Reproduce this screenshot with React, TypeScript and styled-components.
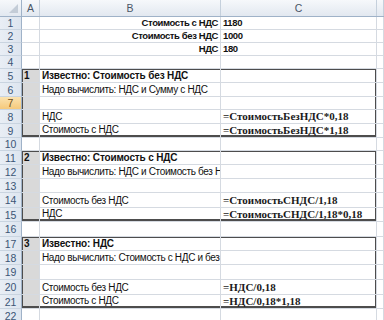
import React from "react";
import styled, { createGlobalStyle, css } from "styled-components";

const GlobalStyle = createGlobalStyle`
	html, body {
		margin: 0;
		padding: 0;
		background: #ffffff;
		overflow: hidden;
	}
`;

const COLS = "22px 18px 181px 156px 1fr";
const GRID = "#d5dae1";
const BOX = "#4d4d4d";

type BoxPos = "first" | "mid" | "last";

type RowData = {
	n: number;
	h: number;
	a?: string;
	b?: string;
	c?: string;
	bold?: boolean;
	top?: boolean;
	formula?: boolean;
	box?: BoxPos;
	selected?: boolean;
};

const rows: RowData[] = [
	{ n: 1, h: 13, b: "Стоимость с НДС", c: "1180", top: true },
	{ n: 2, h: 13, b: "Стоимость без НДС", c: "1000", top: true },
	{ n: 3, h: 13, b: "НДС", c: "180", top: true },
	{ n: 4, h: 13 },
	{ n: 5, h: 14, a: "1", b: "Известно: Стоимость без НДС", bold: true, box: "first" },
	{ n: 6, h: 14, b: "Надо вычислить: НДС и Сумму с НДС", box: "mid" },
	{ n: 7, h: 13, box: "mid", selected: true },
	{ n: 8, h: 14, b: "НДС", c: "=СтоимостьБезНДС*0,18", formula: true, box: "mid" },
	{ n: 9, h: 14, b: "Стоимость с НДС", c: "=СтоимостьБезНДС*1,18", formula: true, box: "last" },
	{ n: 10, h: 13 },
	{ n: 11, h: 14, a: "2", b: "Известно: Стоимость с НДС", bold: true, box: "first" },
	{ n: 12, h: 14, b: "Надо вычислить: НДС и Стоимость без НДС", box: "mid" },
	{ n: 13, h: 14, box: "mid" },
	{ n: 14, h: 15, b: "Стоимость без НДС", c: "=СтоимостьСНДС/1,18", formula: true, box: "mid" },
	{ n: 15, h: 14, b: "НДС", c: "=СтоимостьСНДС/1,18*0,18", formula: true, box: "last" },
	{ n: 16, h: 15 },
	{ n: 17, h: 14, a: "3", b: "Известно: НДС", bold: true, box: "first" },
	{ n: 18, h: 14, b: "Надо вычислить: Стоимость с НДС и  без НДС", box: "mid" },
	{ n: 19, h: 15, box: "mid" },
	{ n: 20, h: 15, b: "Стоимость без НДС", c: "=НДС/0,18", formula: true, box: "mid" },
	{ n: 21, h: 14, b: "Стоимость с НДС", c: "=НДС/0,18*1,18", formula: true, box: "last" },
	{ n: 22, h: 14 },
];

const Sheet = styled.div`
	width: 384px;
	height: 320px;
	overflow: hidden;
	font-family: "Liberation Sans", Arial, sans-serif;
	font-size: 10px;
	letter-spacing: -0.35px;
	color: #111;
`;

const Row = styled.div<{ $h: number }>`
	display: grid;
	grid-template-columns: ${COLS};
	height: ${(p) => p.$h}px;
`;

const HeaderRow = styled(Row)`
	background: linear-gradient(#f6f8fb, #e2e8f0);
	border-bottom: 1px solid #9fb2c8;
	box-sizing: border-box;
`;

const Corner = styled.div`
	position: relative;
	border-right: 1px solid #9fb2c8;
	&::after {
		content: "";
		position: absolute;
		right: 3px;
		bottom: 3px;
		border-style: solid;
		border-width: 0 0 9px 9px;
		border-color: transparent transparent #c3ccd7 transparent;
	}
`;

const ColHeader = styled.div`
	display: flex;
	align-items: center;
	justify-content: center;
	border-right: 1px solid #c5d0dc;
	color: #4a5666;
	font-size: 10.5px;
	letter-spacing: 0;
`;

const RowHeader = styled.div<{ $selected?: boolean }>`
	display: flex;
	align-items: center;
	justify-content: center;
	box-sizing: border-box;
	border-right: 1px solid #9fb2c8;
	border-bottom: 1px solid #c9d4e0;
	background: ${(p) => (p.$selected ? "linear-gradient(#fbe3b0, #f5c97c)" : "linear-gradient(90deg, #e9eef5, #dde5ef)")};
	color: ${(p) => (p.$selected ? "#6b4c1a" : "#3b5575")};
	font-size: 10.5px;
	letter-spacing: 0;
`;

const boxShadow = (box?: BoxPos, side?: "left" | "right") => {
	if (!box) return "";
	const s: string[] = [];
	if (box === "first") s.push(`inset 0 1px 0 ${BOX}`);
	if (box === "last") s.push(`inset 0 -2px 0 ${BOX}`);
	if (side === "left") s.push(`inset 1px 0 0 ${BOX}`);
	if (side === "right") s.push(`inset -1px 0 0 ${BOX}`);
	return s.length ? `box-shadow: ${s.join(", ")};` : "";
};

const Cell = styled.div<{
	$box?: BoxPos;
	$side?: "left" | "right";
	$align?: "left" | "right";
	$bold?: boolean;
	$top?: boolean;
	$shade?: boolean;
	$formula?: boolean;
}>`
	display: flex;
	align-items: flex-end;
	justify-content: ${(p) => (p.$align === "right" ? "flex-end" : "flex-start")};
	box-sizing: border-box;
	padding: 0 2px ${(p) => (p.$box === "last" ? 2 : 1)}px 2px;
	border-right: 1px solid ${GRID};
	border-bottom: 1px solid ${GRID};
	background: ${(p) => (p.$shade ? "#d9d9d9" : "#ffffff")};
	white-space: nowrap;
	overflow: hidden;
	${(p) =>
		p.$bold &&
		css`
			font-weight: 700;
			letter-spacing: -0.15px;
		`}
	${(p) =>
		p.$top &&
		css`
			font-weight: 700;
			font-size: 9.5px;
			letter-spacing: -0.4px;
		`}
	${(p) =>
		p.$formula &&
		css`
			align-items: center;
			font-family: "Liberation Serif", "Times New Roman", serif;
			font-size: 11px;
			font-weight: 700;
			letter-spacing: 0;
			color: #1a1a1a;
		`}
	${(p) => boxShadow(p.$box, p.$side)}
`;

export default function App() {
	return (
		<>
			<GlobalStyle />
			<Sheet>
				<HeaderRow $h={17}>
					<Corner />
					<ColHeader>A</ColHeader>
					<ColHeader>B</ColHeader>
					<ColHeader>C</ColHeader>
					<ColHeader />
				</HeaderRow>
				{rows.map((r) => (
					<Row key={r.n} $h={r.h}>
						<RowHeader $selected={r.selected}>{r.n}</RowHeader>
						<Cell $box={r.box} $side="left" $shade={!!r.box} $bold>
							{r.a}
						</Cell>
						<Cell $box={r.box} $align={r.top ? "right" : "left"} $bold={r.bold} $top={r.top}>
							{r.b}
						</Cell>
						<Cell $box={r.box} $side="right" $top={r.top} $formula={r.formula}>
							{r.c}
						</Cell>
						<Cell />
					</Row>
				))}
			</Sheet>
		</>
	);
}
